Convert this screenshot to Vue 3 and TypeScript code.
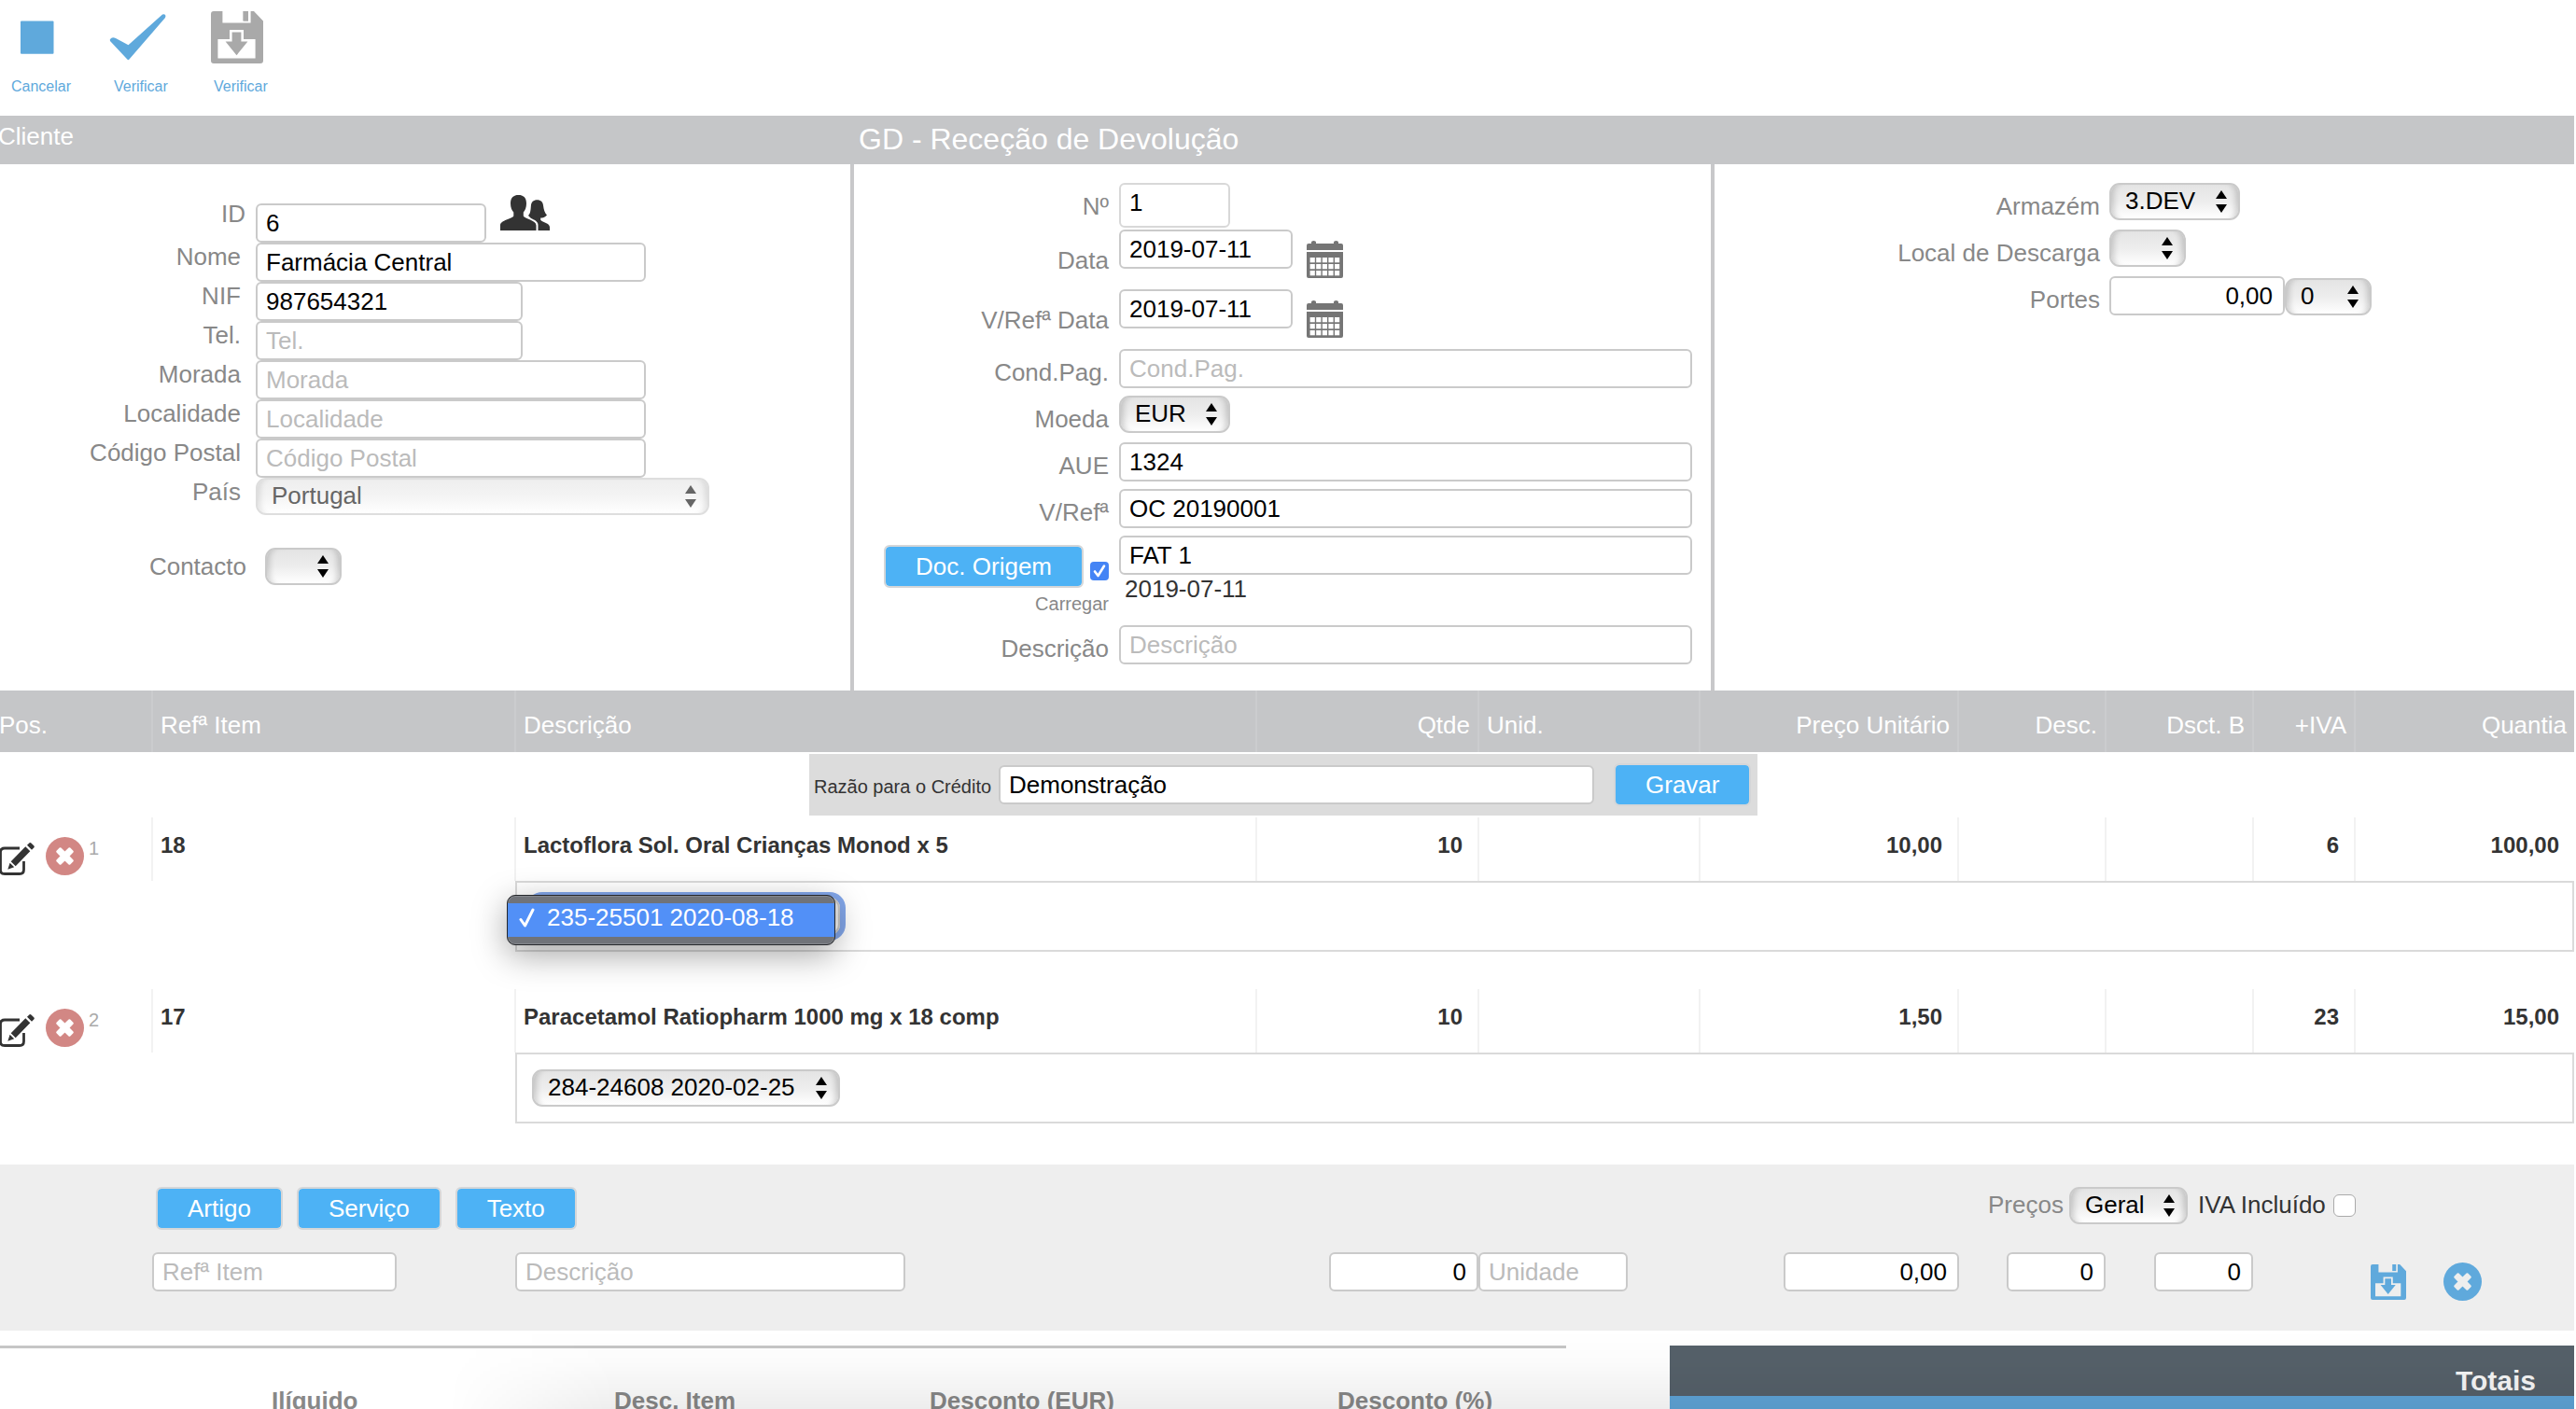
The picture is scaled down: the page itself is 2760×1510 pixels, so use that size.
<script setup lang="ts">
interface Field {
  label: string
  value: string
  width: number
}
interface Line {
  pos: number
  ref: string
  description: string
  qty: string
  unit: string
  price: string
  disc: string
  discB: string
  vat: string
  amount: string
  lot: string
  open: boolean
}

const clientFields: Field[] = [
  { label: 'Nome', value: 'Farmácia Central', width: 418 },
  { label: 'NIF', value: '987654321', width: 286 },
  { label: 'Tel.', value: '', width: 286 },
  { label: 'Morada', value: '', width: 418 },
  { label: 'Localidade', value: '', width: 418 },
  { label: 'Código Postal', value: '', width: 418 },
]
const dates = [
  { label: 'Data', value: '2019-07-11' },
  { label: 'V/Refª Data', value: '2019-07-11' },
]
const refs = [
  { label: 'AUE', value: '1324' },
  { label: 'V/Refª', value: 'OC 20190001' },
]
const lines: Line[] = [
  {
    pos: 1, ref: '18', description: 'Lactoflora Sol. Oral Crianças Monod x 5', qty: '10', unit: '',
    price: '10,00', disc: '', discB: '', vat: '6', amount: '100,00', lot: '235-25501 2020-08-18', open: true,
  },
  {
    pos: 2, ref: '17', description: 'Paracetamol Ratiopharm 1000 mg x 18 comp', qty: '10', unit: '',
    price: '1,50', disc: '', discB: '', vat: '23', amount: '15,00', lot: '284-24608 2020-02-25', open: false,
  },
]
const calCols = [3.6, 10.2, 16.8, 23.4, 30]
const calRows = [18, 25, 32]
const floppyBody =
  'M3 0H12.4V12.4H42.6V0H46L56 10.5V53Q56 56 53 56H3Q0 56 0 53V3Q0 0 3 0ZM34.6 0H40V10.4H34.6ZM7.4 30V50.4H47.6V30H35V20H20V30Z'
const floppyArrow = 'M22.6 22.6H32.4V32.6H39.4L27.5 47.2L15.6 32.6H22.6Z'
const crossPath = 'M12.4 15.6L15.6 12.4L20.5 17L25.4 12.4L28.6 15.6L24 20.5L28.6 25.4L25.4 28.6L20.5 24L15.6 28.6L12.4 25.4L17 20.5Z'
</script>

<template>
  <div class="page">
    <nav class="toolbar">
      <a class="tool t1">
        <svg viewBox="0 0 62 72" width="62" height="72"><rect x="10" y="22.5" width="35.5" height="35.2" rx="1" fill="#5fa9dc" /></svg>
        <span>Cancelar</span>
      </a>
      <a class="tool t2">
        <svg viewBox="0 0 62 72" width="62" height="72">
          <path d="M2 41Q4 39.500 7 41L20.500 48.300L57 15.600Q60 14.500 60.500 17L60 19L21.500 63.500Q20.500 65 19.300 63.500L1 44Q0 42.500 2 41Z" fill="#5fa9dc" />
        </svg>
        <span>Verificar</span>
      </a>
      <a class="tool t3">
        <svg viewBox="0 -12 62 72" width="62" height="72" fill="#a9a9a9">
          <path :d="floppyBody" fill-rule="evenodd" />
          <path :d="floppyArrow" />
          <rect x="34.600" y="0" width="5.400" height="10.400" />
        </svg>
        <span>Verificar</span>
      </a>
    </nav>

    <header class="band">
      <div class="band-client">Cliente</div>
      <div class="band-title">GD - Receção de Devolução</div>
    </header>

    <main class="panels">
      <section class="panel client">
        <div class="crow id-row">
          <label>ID</label>
          <input class="inp" value="6" />
          <svg class="people" viewBox="0 0 53 38" width="53" height="38" fill="#333">
            <path d="M11 9C11 2.500 14.500 0 19.500 0S28 2.500 28 9C28 13.500 26.600 16.500 24.800 18.500V22.500C26 25.500 38.500 27 38.500 32.500V38H0V32.500C0 27 13 25.500 14.300 22.500V18.500C12.400 16.500 11 13.500 11 9Z" />
            <path d="M30 22C32.500 20 32.600 15 32.900 11.500C33.300 7.500 35.500 5.300 39.500 5.300S45.700 7.500 46.100 11.500C46.500 15 47.500 19 50 21.500C48 24 45.500 24.500 43.200 24.500V26.800C45.500 29.500 53 30 53 34.500V38H40.500V32C40.500 28 36 26.500 33 25Z" />
          </svg>
        </div>
        <div v-for="f in clientFields" :key="f.label" class="crow">
          <label>{{ f.label }}</label>
          <input class="inp" :value="f.value" :placeholder="f.label" :style="{ width: f.width + 'px' }" />
        </div>
        <div class="crow">
          <label>País</label>
          <div class="sel country"><span>Portugal</span><i class="arrows" /></div>
        </div>
        <div class="crow contact">
          <label>Contacto</label>
          <div class="sel small"><i class="arrows" /></div>
        </div>
      </section>

      <section class="panel doc">
        <div class="drow">
          <label>Nº</label>
          <input class="inp number" value="1" />
        </div>
        <div v-for="d in dates" :key="d.label" class="drow date-row">
          <label>{{ d.label }}</label>
          <input class="inp date" :value="d.value" />
          <svg class="calendar" viewBox="0 0 39 40" width="39" height="40">
            <path d="M0 10V5Q0 3 2 3H5V1.500Q5 0 7.500 0T10 1.500V3H29V1.500Q29 0 31.500 0T34 1.500V3H37Q39 3 39 5V10Z" fill="#757575" />
            <path d="M0 12H39V38Q39 40 37 40H2Q0 40 0 38Z" fill="#757575" />
            <template v-for="y in calRows" :key="y">
              <rect v-for="x in calCols" :key="x" :x="x" :y="y" width="5.200" height="5.300" fill="#fff" />
            </template>
          </svg>
        </div>
        <div class="drow">
          <label>Cond.Pag.</label>
          <input class="inp wide" placeholder="Cond.Pag." />
        </div>
        <div class="drow">
          <label>Moeda</label>
          <div class="sel currency"><span>EUR</span><i class="arrows" /></div>
        </div>
        <div v-for="r in refs" :key="r.label" class="drow">
          <label>{{ r.label }}</label>
          <input class="inp wide" :value="r.value" />
        </div>
        <div class="drow origin">
          <div class="origin-left">
            <div class="origin-actions">
              <button class="btn">Doc. Origem</button>
              <span class="check on">
                <svg viewBox="0 0 20 20" width="20" height="20"><path d="M5 10.500L8.500 15L15 4.500" fill="none" stroke="#fff" stroke-width="2.600" stroke-linecap="round" stroke-linejoin="round" /></svg>
              </span>
            </div>
            <div class="load">Carregar</div>
          </div>
          <div class="origin-right">
            <input class="inp wide" value="FAT 1" />
            <div class="origin-date">2019-07-11</div>
          </div>
        </div>
        <div class="drow">
          <label>Descrição</label>
          <input class="inp wide" placeholder="Descrição" />
        </div>
      </section>

      <section class="panel stock">
        <div class="drow">
          <label>Armazém</label>
          <div class="sel warehouse"><span>3.DEV</span><i class="arrows" /></div>
        </div>
        <div class="drow">
          <label>Local de Descarga</label>
          <div class="sel small"><i class="arrows" /></div>
        </div>
        <div class="drow">
          <label>Portes</label>
          <input class="inp right freight" value="0,00" />
          <div class="sel freight-vat"><span>0</span><i class="arrows" /></div>
        </div>
      </section>
    </main>

    <div class="grid thead">
      <div class="pos-h">Pos.</div>
      <div>Refª Item</div>
      <div>Descrição</div>
      <div class="r">Qtde</div>
      <div>Unid.</div>
      <div class="r">Preço Unitário</div>
      <div class="r">Desc.</div>
      <div class="r">Dsct. B</div>
      <div class="r">+IVA</div>
      <div class="r">Quantia</div>
    </div>

    <div class="reason">
      <span>Razão para o Crédito</span>
      <input class="inp" value="Demonstração" />
      <button class="btn">Gravar</button>
    </div>

    <div v-for="l in lines" :key="l.pos" class="line">
      <div class="grid tbody">
        <div class="pos">
          <svg class="edit" viewBox="0 0 38 38" width="38" height="38">
            <path d="M21 7H5Q.5 7 .5 11V30.500Q.5 34.500 5 34.500H21Q25.500 34.500 25.500 30V21" fill="none" stroke="#333" stroke-width="2.800" />
            <path d="M27.300 5.300L32.300 10.300L16.700 26.300L11.700 21.300ZM29 3.800L31.600 1.300Q32.500.6 33.400 1.400L36.500 4.600Q37.200 5.500 36.500 6.300L34 8.800ZM10.600 22.800L15.200 27.300L8.300 29.800Z" fill="#333" />
          </svg>
          <svg class="remove" viewBox="0 0 41 41" width="41" height="41">
            <circle cx="20.500" cy="20.500" r="20.500" fill="#d28784" />
            <path :d="crossPath" fill="#fff" stroke="#fff" stroke-width="2.400" stroke-linejoin="round" />
          </svg>
          <span>{{ l.pos }}</span>
        </div>
        <div>{{ l.ref }}</div>
        <div>{{ l.description }}</div>
        <div class="r">{{ l.qty }}</div>
        <div>{{ l.unit }}</div>
        <div class="r">{{ l.price }}</div>
        <div class="r">{{ l.disc }}</div>
        <div class="r">{{ l.discB }}</div>
        <div class="r">{{ l.vat }}</div>
        <div class="r">{{ l.amount }}</div>
      </div>
      <div class="lot">
        <div class="sel lot-sel" :class="{ focus: l.open }">
          <span v-if="!l.open">{{ l.lot }}</span><i v-if="!l.open" class="arrows" />
        </div>
        <div v-if="l.open" class="popup">
          <div class="option">
            <svg viewBox="0 0 18 22" width="18" height="22"><path d="M2 12.500L6.500 19L15 2" fill="none" stroke="#fff" stroke-width="3" stroke-linecap="round" stroke-linejoin="round" /></svg>
            <span>{{ l.lot }}</span>
          </div>
        </div>
      </div>
    </div>

    <section class="entry">
      <div class="entry-top">
        <button class="btn">Artigo</button>
        <button class="btn">Serviço</button>
        <button class="btn">Texto</button>
        <div class="prices">
          <span class="muted">Preços</span>
          <div class="sel price-list"><span>Geral</span><i class="arrows" /></div>
          <span class="vat-label">IVA Incluído</span>
          <span class="check" />
        </div>
      </div>
      <div class="entry-row">
        <input class="inp e-ref" placeholder="Refª Item" />
        <input class="inp e-desc" placeholder="Descrição" />
        <input class="inp right e-qty" value="0" />
        <input class="inp e-unit" placeholder="Unidade" />
        <input class="inp right e-price" value="0,00" />
        <input class="inp right e-disc" value="0" />
        <input class="inp right e-disc2" value="0" />
        <svg class="e-save" viewBox="0 0 56 56" width="38" height="38" fill="#5fa9dc">
          <path :d="floppyBody" fill-rule="evenodd" />
          <path :d="floppyArrow" />
          <rect x="34.600" y="0" width="5.400" height="10.400" />
        </svg>
        <svg class="e-clear" viewBox="0 0 41 41" width="41" height="41">
          <circle cx="20.500" cy="20.500" r="20.500" fill="#5fa9dc" />
          <path :d="crossPath" fill="#eee" stroke="#eee" stroke-width="2.400" stroke-linejoin="round" />
        </svg>
      </div>
    </section>

    <footer class="bottom">
      <div class="sums">
        <span class="s1">Ilíquido</span>
        <span class="s2">Desc. Item</span>
        <span class="s3">Desconto (EUR)</span>
        <span class="s4">Desconto (%)</span>
      </div>
      <div class="totals">
        <div class="totals-head">Totais</div>
        <div class="totals-body" />
      </div>
      <div class="haze" />
    </footer>
  </div>
</template>

<style>
body {
  margin: 0;
  background: #fff;
}
</style>

<style scoped>
.page,
.page * {
  box-sizing: border-box;
}
.page {
  width: 2758px;
  height: 1510px;
  overflow: hidden;
  display: flex;
  flex-direction: column;
  background: #fff;
  color: #333;
  font: 26px/30px "Liberation Sans", Arial, sans-serif;
}
.page > * {
  flex: none;
}
svg {
  display: block;
  flex: none;
}

/* toolbar */
.toolbar {
  height: 124px;
  display: flex;
}
.tool {
  display: flex;
  flex-direction: column;
  font-size: 16px;
  line-height: 20px;
  color: #5fa9dc;
  white-space: nowrap;
}
.tool span {
  margin-top: 11px;
}
.t1 { width: 105px; padding-left: 12px; }
.t2 { width: 121px; padding-left: 12px; }
.t2 span { margin-left: 5px; }
.t3 span { margin-left: 3px; }

/* heading band */
.band {
  height: 52px;
  display: flex;
  background: #c5c6c8;
  color: #fff;
}
.band-client {
  width: 920px;
  line-height: 45px;
  text-indent: -2px;
}
.band-title {
  font-size: 32px;
  line-height: 50px;
}

/* form panels */
.panels {
  height: 564px;
  display: flex;
}
.panel {
  display: flex;
  flex-direction: column;
}
label {
  color: #888;
  text-align: right;
  flex: none;
  white-space: nowrap;
}
.inp {
  flex: none;
  height: 42px;
  margin: 0;
  padding: 0 9px;
  border: 2px solid #cacaca;
  border-radius: 6px;
  background: #fff;
  color: #000;
  font: 26px "Liberation Sans", Arial, sans-serif;
  outline: none;
}
.inp::placeholder {
  color: #bbb;
  opacity: 1;
}
.inp.right {
  text-align: right;
  padding-right: 11px;
}
.client {
  width: 911px;
  padding-top: 42px;
}
.crow {
  display: flex;
  height: 42px;
}
.crow label {
  width: 258px;
  margin-right: 16px;
}
.id-row label {
  width: 263px;
  margin-right: 11px;
  margin-top: -4px;
}
.id-row .inp {
  width: 247px;
}
.people {
  margin: -9px 0 0 15px;
}
.contact {
  margin-top: 33px;
}
.contact label {
  width: 264px;
  margin-right: 20px;
  line-height: 41px;
}
.doc {
  width: 922px;
  border-left: 4px solid #c8c8ca;
  padding-top: 20px;
}
.drow {
  display: flex;
  height: 50px;
}
.drow > label {
  line-height: 50px;
  width: 273px;
  margin-right: 11px;
}
.date-row {
  height: 64px;
}
.drow.date-row > label {
  line-height: 66px;
}
.number {
  width: 119px;
  height: 48px;
  padding-bottom: 6px;
  border-color: #d8d8d8;
}
.date {
  width: 186px;
}
.calendar {
  margin: 12px 0 0 15px;
}
.wide {
  width: 614px;
}
.origin {
  height: 96px;
}
.origin-left {
  width: 273px;
  margin-right: 11px;
  padding-top: 10px;
}
.origin-actions {
  display: flex;
  justify-content: flex-end;
  gap: 7px;
}
.load {
  text-align: right;
  font-size: 20px;
  line-height: 24px;
  color: #888;
  margin-top: 5px;
}
.origin-right {
  display: flex;
  flex-direction: column;
}
.origin-date {
  padding-left: 6px;
}
.stock {
  width: 925px;
  border-left: 4px solid #c8c8ca;
  padding-top: 20px;
}
.stock .drow > label {
  width: 413px;
  margin-right: 10px;
}
.warehouse { width: 140px; }
.freight { width: 188px; }
.sel.freight-vat { width: 93px; margin-top: 2px; }
.currency { width: 119px; }
.small { width: 82px; }

/* select boxes */
.sel {
  flex: none;
  height: 40px;
  display: flex;
  align-items: center;
  justify-content: space-between;
  padding: 0 12px 2px 15px;
  border: 2px solid #cacaca;
  border-radius: 11px;
  background: linear-gradient(#e4e4e4, #ededed 50%, #fff);
  box-shadow: inset 8px 0 6px -5px rgba(0, 0, 0, 0.17), inset -8px 0 6px -5px rgba(0, 0, 0, 0.17);
  color: #000;
}
.country {
  width: 486px;
  color: #666;
  border-color: #dedede;
  background: linear-gradient(#eee, #f4f4f4 50%, #fff);
  box-shadow: inset 8px 0 6px -5px rgba(0, 0, 0, 0.1), inset -8px 0 6px -5px rgba(0, 0, 0, 0.1);
}
.arrows {
  margin: 2px 0 0 auto;
  width: 12px;
  height: 24px;
  display: flex;
  flex-direction: column;
  justify-content: space-between;
}
.arrows::before,
.arrows::after {
  content: "";
  border: 6px solid transparent;
}
.arrows::before {
  border-top: 0;
  border-bottom: 9.500px solid currentColor;
}
.arrows::after {
  border-bottom: 0;
  border-top: 9.500px solid currentColor;
}

.btn {
  flex: none;
  height: 46px;
  margin: 0;
  padding: 0 32px;
  border: 2px solid #d4d6d8;
  border-radius: 6px;
  background: #4db2f5;
  background-clip: padding-box;
  color: #fff;
  font: 26px/42px "Liberation Sans", Arial, sans-serif;
  white-space: nowrap;
}
.check {
  flex: none;
  width: 24px;
  height: 24px;
  border: 1px solid #aaa;
  border-radius: 6px;
  background: #fff;
}
.check.on {
  width: 20px;
  height: 20px;
  margin-top: 18px;
  border: 0;
  border-radius: 4px;
  background: #4484f5;
}

/* item table */
.grid {
  display: grid;
  grid-template-columns: 164px 389px 794px 238px 237px 277px 158px 158px 109px 234px;
}
.grid > div {
  border-right: 2px solid #f2f2f2;
  padding: 0 8px;
  white-space: nowrap;
}
.grid > div:last-child {
  border-right: 0;
}
.grid .r {
  text-align: right;
}
.thead {
  height: 66px;
  line-height: 58px;
  background: #c5c6c8;
  color: #fff;
}
.thead > div {
  padding-top: 8px;
  border-color: #cbccce;
}
.thead > .pos-h {
  padding-left: 0;
  text-indent: -1px;
}
.reason {
  width: 1016px;
  height: 66px;
  margin: 2px 0 2px 867px;
  padding-left: 5px;
  display: flex;
  align-items: center;
  background: #dcdcdc;
}
.reason span {
  width: 198px;
  font-size: 20px;
  line-height: 36px;
  padding-top: 4px;
  white-space: nowrap;
}
.reason .inp {
  width: 638px;
  margin-right: 21px;
}
.reason .btn {
  border-color: #d4d6d8;
}
.line {
  height: 184px;
}
.tbody {
  height: 68px;
  font-size: 24px;
  font-weight: bold;
  line-height: 60px;
}
.tbody .r {
  padding-right: 16px;
}
.tbody > .pos {
  display: flex;
  padding: 0;
  font-size: 20px;
  font-weight: normal;
  color: #aaa;
}
.edit {
  margin: 26px 11px 0 0;
}
.remove {
  margin-top: 21px;
}
.pos span {
  margin-left: 5px;
  line-height: 66px;
}
.lot {
  position: relative;
  width: 2206px;
  height: 76px;
  margin-left: 552px;
  padding: 16px;
  border: 2px solid #dadada;
}
.lot-sel {
  width: 330px;
}
.focus {
  box-shadow: 0 0 0 6px #83a7ea;
}
.popup {
  position: absolute;
  left: -11px;
  top: 13px;
  width: 352px;
  height: 54px;
  padding: 8px 0;
  border: 1px solid #25272b;
  border-radius: 9px;
  background: #707379;
  box-shadow: inset 0 0 0 1px #85888d, 0 10px 36px rgba(0, 0, 0, 0.36);
}
.option {
  height: 36px;
  display: flex;
  padding-left: 12px;
  background: #5290f7;
  color: #fff;
  white-space: nowrap;
}
.option svg {
  margin: 5px 12px 0 0;
}

/* new line entry */
.entry {
  height: 178px;
  margin-top: 4px;
  padding-top: 24px;
  background: #eee;
}
.entry-top {
  display: flex;
  gap: 15px;
  height: 70px;
  padding-left: 167px;
}
.prices {
  display: flex;
  margin-left: auto;
  width: 628px;
  line-height: 38px;
  white-space: nowrap;
}
.muted {
  width: 87px;
  color: #888;
}
.price-list {
  width: 127px;
}
.vat-label {
  width: 145px;
  margin-left: 11px;
}
.prices .check {
  margin-top: 8px;
}
.entry-row {
  display: flex;
}
.e-ref { width: 262px; margin-left: 163px; }
.e-desc { width: 418px; margin-left: 127px; }
.e-qty { width: 160px; margin-left: 454px; }
.e-unit { width: 160px; }
.e-price { width: 188px; margin-left: 167px; }
.e-disc { width: 106px; margin-left: 51px; }
.e-disc2 { width: 106px; margin-left: 52px; }
.e-save { margin: 13px 0 0 126px; }
.e-clear { margin: 11px 0 0 40px; }

/* summary */
.bottom {
  position: relative;
  display: flex;
  height: 84px;
  padding-top: 16px;
}
.sums {
  width: 1678px;
  margin-right: 111px;
  padding-top: 41px;
  display: flex;
  border-top: 3px solid #c6c6c6;
  color: #888;
  font-weight: bold;
  white-space: nowrap;
}
.s1 { width: 367px; margin-left: 291px; }
.s2 { width: 338px; }
.s3 { width: 437px; }
.totals {
  width: 969px;
}
.totals-head {
  height: 54px;
  padding-right: 41px;
  text-align: right;
  font-size: 30px;
  font-weight: bold;
  line-height: 75px;
  color: #f7f7f7;
  background: #56616a;
}
.totals-body {
  height: 14px;
  background: #5fa5d8;
}
.haze {
  position: absolute;
  left: 480px;
  right: 0;
  top: 0;
  height: 84px;
  pointer-events: none;
  background: linear-gradient(rgba(0, 0, 0, 0), rgba(0, 0, 0, 0.015) 40%, rgba(0, 0, 0, 0.07));
  mask-image: linear-gradient(to right, transparent, #000 180px);
}
</style>
